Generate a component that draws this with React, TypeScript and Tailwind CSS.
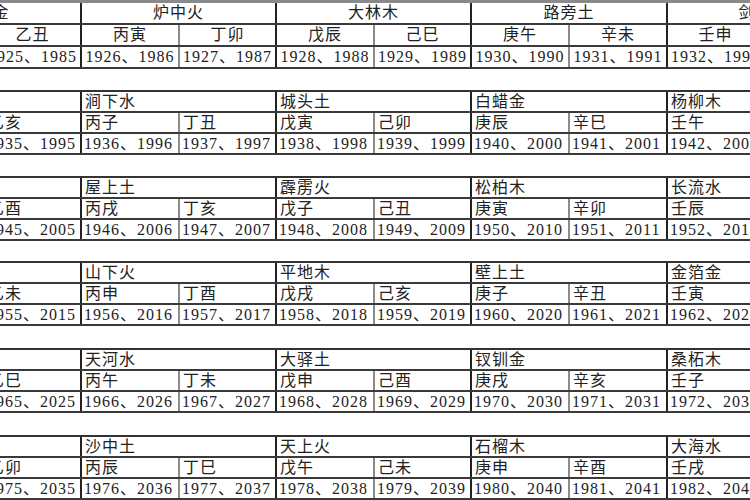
const STEMS = ["甲", "乙", "丙", "丁", "戊", "己", "庚", "辛", "壬", "癸"];
const BRANCHES = ["子", "丑", "寅", "卯", "辰", "巳", "午", "未", "申", "酉", "戌", "亥"];
const NAYIN = [
  "海中金", "炉中火", "大林木", "路旁土", "剑锋金",
  "山头火", "涧下水", "城头土", "白蜡金", "杨柳木",
  "泉中水", "屋上土", "霹雳火", "松柏木", "长流水",
  "沙中金", "山下火", "平地木", "壁上土", "金箔金",
  "覆灯火", "天河水", "大驿土", "钗钏金", "桑柘木",
  "大溪水", "沙中土", "天上火", "石榴木", "大海水",
];

const COLS = "grid grid-cols-[97px_97px_98px_97px_98px_97px_98px_98px_97px_97px]";
const GAPS = ["", "mt-[21px]", "mt-[21px]", "mt-[20px]", "mt-[22px]", "mt-[22px]"];

function Block({ index }: { index: number }) {
  const centered = index === 0;
  const rowH = centered ? "h-[22px]" : "h-[21px]";
  const align = centered ? "justify-center" : "justify-start pl-[3px]";
  const top = centered ? "border-t-[3px] border-[#8a8a8a]" : "border-t-2 border-[#333]";
  const cols = Array.from({ length: 10 }, (_, j) => {
    const k = index * 10 + j;
    return {
      gz: STEMS[j] + BRANCHES[k % 12],
      years: `${1924 + k}、${1984 + k}`,
      line: j % 2 === 1 ? "border-[#222]" : "border-[#8c8c8c]",
    };
  });

  return (
    <div className={`${GAPS[index]} ${top}`}>
      {/* nayin header row */}
      <div className={`${COLS} ${rowH} border-b-2 border-[#3a3a3a]`}>
        {NAYIN.slice(index * 5, index * 5 + 5).map((name) => (
          <div
            key={name}
            className={`col-span-2 flex items-center ${align} border-r-2 border-[#222] overflow-hidden whitespace-nowrap`}
          >
            {name}
          </div>
        ))}
      </div>

      {/* stem-branch row */}
      <div className={`${COLS} ${rowH} border-b-2 border-[#3a3a3a]`}>
        {cols.map((c) => (
          <div
            key={c.gz}
            className={`flex items-center ${align} border-r-2 ${c.line} overflow-hidden whitespace-nowrap`}
          >
            {c.gz}
          </div>
        ))}
      </div>

      {/* years row */}
      <div className={`${COLS} ${rowH} border-b-2 border-[#3a3a3a]`}>
        {cols.map((c) => (
          <div
            key={c.years}
            className={`flex items-center ${centered ? "justify-center" : "justify-start pl-[2px]"} border-r-2 ${c.line} overflow-hidden whitespace-nowrap`}
          >
            {c.years}
          </div>
        ))}
      </div>
    </div>
  );
}

export default function App() {
  return (
    <div className="w-[750px] h-[500px] overflow-hidden bg-white font-['Liberation_Serif','Noto_Sans_CJK_SC',serif] text-[16px] leading-none tracking-[1px] text-[#222]">
      <div className="-ml-[112px] w-[974px]">
        {[0, 1, 2, 3, 4, 5].map((i) => (
          <Block key={i} index={i} />
        ))}
      </div>
    </div>
  );
}
